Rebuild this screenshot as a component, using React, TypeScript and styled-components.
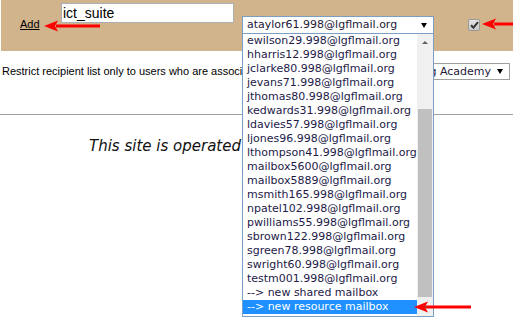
import styled, { createGlobalStyle } from "styled-components";

const GlobalStyle = createGlobalStyle`
  body {
    margin: 0;
    background: #ffffff;
    overflow: hidden;
  }
`;

const Page = styled.div`
  position: relative;
  width: 513px;
  height: 320px;
  overflow: hidden;
  font-family: "DejaVu Sans", Verdana, sans-serif;
  color: #000;
`;

const Header = styled.div`
  display: flex;
  align-items: flex-start;
  height: 51px;
  margin-left: 1px;
  background: #d2b48c;
`;

const AddCell = styled.div`
  width: 60px;
  padding-left: 19px;
  box-sizing: border-box;
`;

const AddLink = styled.a`
  display: inline-block;
  margin-top: 18px;
  font: 11px/13px "Liberation Sans", Arial, sans-serif;
  color: #000;
  text-decoration: underline;
`;

const NameInput = styled.input`
  box-sizing: border-box;
  width: 173px;
  height: 20px;
  margin: 3px 0 0;
  padding: 0 1px;
  border: 1px solid #a9b0b8;
  background: #fff;
  font: 14px "Liberation Sans", Arial, sans-serif;
  color: #000;
  outline: none;
`;

const SelectBox = styled.div<{ $width: number; $focus?: boolean }>`
  box-sizing: border-box;
  display: flex;
  align-items: center;
  justify-content: space-between;
  width: ${(p) => p.$width}px;
  height: 18px;
  padding: 0 6px 0 4px;
  border: 1px solid ${(p) => (p.$focus ? "#7b9ec4" : "#a0a0a0")};
  background: #fff;
  font-size: 11px;
  line-height: 16px;
  color: #1c1838;
  white-space: nowrap;
  overflow: hidden;
`;

const TopSelect = styled(SelectBox)`
  margin: 16px 0 0 8px;
`;

const SchoolSelect = styled(SelectBox)`
  height: 17px;
  margin-left: auto;
  justify-content: flex-end;
  gap: 6px;
  padding-right: 6px;
`;

const Caret = styled.span`
  flex: none;
  width: 0;
  height: 0;
  border-left: 3px solid transparent;
  border-right: 3px solid transparent;
  border-top: 5px solid #000;
`;

const CheckBox = styled.span`
  display: flex;
  align-items: center;
  justify-content: center;
  box-sizing: border-box;
  width: 12px;
  height: 12px;
  margin: 19px 0 0 34px;
  border: 1px solid #9a9a9a;
  border-radius: 2px;
  background: linear-gradient(#e4e4e4, #c8c8c8);
`;

const FilterRow = styled.div`
  display: flex;
  align-items: center;
  height: 17px;
  margin-top: 12px;
  padding: 0 3px 0 2px;
`;

const FilterLabel = styled.span`
  font: 11px/13px "Liberation Sans", Arial, sans-serif;
  color: #000;
  white-space: nowrap;
`;

const Rule = styled.hr`
  height: 0;
  margin: 34px 0 0;
  border: none;
  border-top: 1px solid #a0a0a0;
`;

const Notice = styled.p`
  margin: 22px 0 0;
  padding-left: 89px;
  font-size: 15px;
  line-height: 18px;
  font-style: italic;
  color: #111;
  white-space: nowrap;
`;

const ListBox = styled.div`
  position: absolute;
  left: 242px;
  top: 33px;
  display: flex;
  box-sizing: border-box;
  width: 192px;
  height: 284px;
  border: 1px solid #7b9ec4;
  background: #fff;
`;

const Options = styled.ul`
  flex: 1;
  margin: 0;
  padding: 0;
  list-style: none;
`;

const Option = styled.li<{ $active?: boolean }>`
  height: 14px;
  padding-left: 4px;
  font-size: 11px;
  line-height: 14px;
  white-space: nowrap;
  color: ${(p) => (p.$active ? "#fff" : "#231a48")};
  background: ${(p) => (p.$active ? "#1e90ff" : "transparent")};
`;

const ScrollBar = styled.div`
  display: flex;
  flex-direction: column;
  width: 17px;
  background: #f0f0f0;
`;

const ScrollButton = styled.div<{ $up?: boolean }>`
  display: flex;
  align-items: center;
  justify-content: center;
  height: ${(p) => (p.$up ? 17 : 18)}px;

  &::after {
    content: "";
    border-left: 3px solid transparent;
    border-right: 3px solid transparent;
    ${(p) => (p.$up ? "border-bottom" : "border-top")}: 3px solid #606060;
  }
`;

const Track = styled.div`
  flex: 1;
  padding-top: 58px;
`;

const Thumb = styled.div`
  height: 188px;
  margin: 0 1px 0 1px;
  background: #c0c0c0;
`;

const Arrow = styled.svg<{ $x: number; $y: number }>`
  position: absolute;
  left: ${(p) => p.$x}px;
  top: ${(p) => p.$y - 6}px;
  overflow: visible;
`;

const RedArrow = ({ x, y, length }: { x: number; y: number; length: number }) => (
  <Arrow $x={x} $y={y} width={length} height={12} viewBox={`0 0 ${length} 12`}>
    <line x1={12} y1={6} x2={length} y2={6} stroke="#f00" strokeWidth={3} />
    <polygon points="0,6 14,0.5 11,6 14,11.5" fill="#f00" />
  </Arrow>
);

const mailboxes = [
  "ewilson29.998@lgflmail.org",
  "hharris12.998@lgflmail.org",
  "jclarke80.998@lgflmail.org",
  "jevans71.998@lgflmail.org",
  "jthomas80.998@lgflmail.org",
  "kedwards31.998@lgflmail.org",
  "ldavies57.998@lgflmail.org",
  "ljones96.998@lgflmail.org",
  "lthompson41.998@lgflmail.org",
  "mailbox5600@lgflmail.org",
  "mailbox5889@lgflmail.org",
  "msmith165.998@lgflmail.org",
  "npatel102.998@lgflmail.org",
  "pwilliams55.998@lgflmail.org",
  "sbrown122.998@lgflmail.org",
  "sgreen78.998@lgflmail.org",
  "swright60.998@lgflmail.org",
  "testm001.998@lgflmail.org",
  "--> new shared mailbox",
  "--> new resource mailbox",
];

const App = () => {
  const selected = "--> new resource mailbox";

  return (
    <Page>
      <GlobalStyle />
      <Header>
        <AddCell>
          <AddLink href="#">Add</AddLink>
        </AddCell>
        <NameInput defaultValue="ict_suite" />
        <TopSelect $width={192} $focus>
          <span>ataylor61.998@lgflmail.org</span>
          <Caret />
        </TopSelect>
        <CheckBox>
          <svg width="9" height="8" viewBox="0 0 9 8">
            <path d="M1 4.2 L3.4 6.6 L8 1.2" fill="none" stroke="#333" strokeWidth="2" />
          </svg>
        </CheckBox>
      </Header>

      <FilterRow>
        <FilterLabel>Restrict recipient list only to users who are associated with</FilterLabel>
        <SchoolSelect $width={180}>
          <span>Harrow Learning Academy</span>
          <Caret />
        </SchoolSelect>
      </FilterRow>

      <Rule />
      <Notice>This site is operated by LGfL</Notice>

      <ListBox>
        <Options>
          {mailboxes.map((m) => (
            <Option key={m} $active={m === selected}>
              {m}
            </Option>
          ))}
        </Options>
        <ScrollBar>
          <ScrollButton $up />
          <Track>
            <Thumb />
          </Track>
          <ScrollButton />
        </ScrollBar>
      </ListBox>

      <RedArrow x={44} y={26} length={56} />
      <RedArrow x={482} y={24} length={31} />
      <RedArrow x={414} y={307} length={57} />
    </Page>
  );
};

export default App;
